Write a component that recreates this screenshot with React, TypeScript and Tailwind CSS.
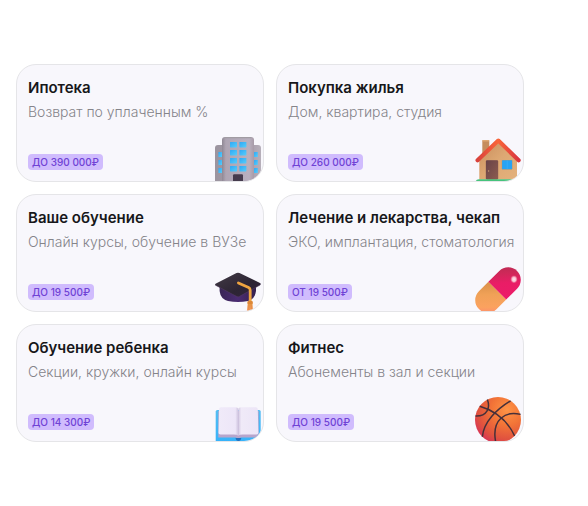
import type { ReactNode } from "react";

function BuildingIcon() {
  return (
    <>
      <defs>
        <linearGradient id="tower" x1="0" x2="1" y1="0" y2="0">
          <stop offset="0" stopColor="#8f8894" />
          <stop offset="0.12" stopColor="#aea5b3" />
          <stop offset="0.85" stopColor="#b9b0bf" />
          <stop offset="1" stopColor="#a89ba8" />
        </linearGradient>
        <linearGradient id="wing" x1="0" x2="1" y1="0" y2="0">
          <stop offset="0" stopColor="#9b949f" />
          <stop offset="0.8" stopColor="#aaa0ae" />
          <stop offset="1" stopColor="#b7b0ba" />
        </linearGradient>
        <linearGradient id="pane" x1="0" x2="1" y1="0" y2="1">
          <stop offset="0" stopColor="#2fa8f5" />
          <stop offset="1" stopColor="#56cdfb" />
        </linearGradient>
      </defs>
      <rect x="0" y="8" width="46" height="40" rx="3" fill="url(#wing)" />
      <rect x="7" y="0" width="32" height="48" rx="3" fill="url(#tower)" />
      <path d="M10 0.6H36" stroke="#a19ca3" strokeWidth="1.2" strokeLinecap="round" />
      {[5, 13, 21, 29].map((y) => (
        <g key={y} fill="url(#pane)">
          <rect x="15" y={y} width="7" height="5.4" rx="0.6" />
          <rect x="24.4" y={y} width="7" height="5.4" rx="0.6" />
        </g>
      ))}
      {[15, 23, 31].map((y) => (
        <g key={y} fill="url(#pane)">
          <rect x="3.4" y={y} width="3.6" height="5" rx="0.5" />
          <rect x="39" y={y} width="3.8" height="5" rx="0.5" />
        </g>
      ))}
      <rect x="18" y="37.3" width="10" height="10" rx="1.2" fill="#453b4d" />
    </>
  );
}

function HouseIcon() {
  return (
    <>
      <defs>
        <linearGradient id="wall" x1="0" x2="1" y1="0" y2="1">
          <stop offset="0" stopColor="#c98d5c" />
          <stop offset="0.5" stopColor="#dda873" />
          <stop offset="1" stopColor="#e3b27d" />
        </linearGradient>
        <linearGradient id="roof" x1="0" x2="1" y1="0" y2="0">
          <stop offset="0" stopColor="#d9423c" />
          <stop offset="0.5" stopColor="#f9663a" />
          <stop offset="1" stopColor="#d93640" />
        </linearGradient>
        <linearGradient id="door" x1="0" x2="1" y1="0" y2="1">
          <stop offset="0" stopColor="#684247" />
          <stop offset="1" stopColor="#8d5c50" />
        </linearGradient>
      </defs>
      <rect x="7.3" y="3" width="7" height="18" rx="1" fill="#c58d5d" />
      <rect x="7.3" y="3" width="7" height="1.6" rx="0.8" fill="#dfa873" />
      <path d="M23.3 5 42 22V42.5H4.3V22Z" fill="url(#wall)" />
      <path d="M2.6 23.2 23.3 3.6 43.6 23.2" fill="none" stroke="url(#roof)" strokeWidth="4.2" strokeLinecap="round" strokeLinejoin="round" />
      <rect x="10.7" y="23" width="12.6" height="19.5" rx="1.4" fill="#c3916b" />
      <rect x="10.9" y="23.2" width="12.2" height="19.3" rx="1.2" fill="url(#door)" />
      <circle cx="13.6" cy="34" r="0.7" fill="#c99b76" />
      <rect x="26.7" y="23" width="10.6" height="9.6" rx="0.8" fill="#c49161" />
      <rect x="27.1" y="23.3" width="10" height="9" rx="0.5" fill="#27a3f4" />
      <path d="M32.2 23.4V32.2" stroke="#3fb1f7" strokeWidth="0.7" />
      <path d="M0.7 44.5Q1 42.2 4 42.2H42Q45 42.2 45.3 44.5Z" fill="#46c37c" />
    </>
  );
}

function GraduationCapIcon() {
  return (
    <>
      <defs>
        <linearGradient id="board" x1="0" x2="1" y1="0" y2="1">
          <stop offset="0" stopColor="#433b46" />
          <stop offset="0.6" stopColor="#2d2534" />
          <stop offset="1" stopColor="#33223f" />
        </linearGradient>
        <linearGradient id="skull" x1="0" x2="1" y1="0" y2="0">
          <stop offset="0" stopColor="#392555" />
          <stop offset="0.5" stopColor="#4b2c73" />
          <stop offset="1" stopColor="#35214e" />
        </linearGradient>
        <linearGradient id="tassel" x1="0" x2="0" y1="0" y2="1">
          <stop offset="0" stopColor="#e6973b" />
          <stop offset="1" stopColor="#f99c6a" />
        </linearGradient>
      </defs>
      <path d="M4.6 17H41V24Q40 32 33 34Q23 35.8 13 34Q5.5 32 4.6 24Z" fill="url(#skull)" />
      <path d="M22 29.6 0.3 18.2Q-0.4 17 1 16.4L21.5 6.1Q23 5.3 24.5 6.1L45 16Q46.4 17 45.2 18L24.6 29.3Q23.3 30.2 22 29.6Z" fill="url(#board)" />
      <path d="M0.4 18.2 22 29.6Q23.3 30.2 24.6 29.3L45.2 18" fill="none" stroke="#563e63" strokeWidth="0.5" />
      <path d="M23.4 15.9 33.6 20.6Q35.2 21.4 35.2 23.4V35" fill="none" stroke="#efa440" strokeWidth="2.8" strokeLinecap="round" strokeLinejoin="round" />
      <path d="M33 34.5H37.2L38.4 47H31.5Z" fill="url(#tassel)" />
      <rect x="32.4" y="34" width="5.4" height="3.2" rx="1.2" fill="#dd8737" />
      <path d="M34 38 33.6 46M36.2 38 36.6 46" stroke="#d87d45" strokeWidth="0.5" />
    </>
  );
}

function PillIcon() {
  return (
    <>
      <defs>
        <linearGradient id="pillTop" x1="1" x2="0" y1="0" y2="1">
          <stop offset="0" stopColor="#b52c51" />
          <stop offset="0.3" stopColor="#cf2859" />
          <stop offset="0.55" stopColor="#e91d66" />
          <stop offset="1" stopColor="#ec1c69" />
        </linearGradient>
        <linearGradient id="pillBottom" x1="1" x2="0" y1="0" y2="1">
          <stop offset="0" stopColor="#d98f4a" />
          <stop offset="0.35" stopColor="#f0a157" />
          <stop offset="0.7" stopColor="#fba25f" />
          <stop offset="1" stopColor="#ff7c78" />
        </linearGradient>
        <radialGradient id="shine">
          <stop offset="0" stopColor="#ffe9f1" />
          <stop offset="0.6" stopColor="#f8bfcf" />
          <stop offset="1" stopColor="#ee7d9c" stopOpacity="0.4" />
        </radialGradient>
      </defs>
      <g transform="rotate(-45 23 23)">
        <path d="M22 10.4H8.6A12.6 12.6 0 0 0 8.6 35.6H22Z" fill="url(#pillBottom)" />
        <path d="M22 10.4H37.4A12.6 12.6 0 0 1 37.4 35.6H22Z" fill="url(#pillTop)" />
      </g>
      <ellipse cx="39" cy="12.3" rx="3.3" ry="3.7" fill="url(#shine)" />
    </>
  );
}

function BookIcon() {
  return (
    <>
      <defs>
        <linearGradient id="cover" x1="0" x2="0" y1="0" y2="1">
          <stop offset="0" stopColor="#55bdf2" />
          <stop offset="1" stopColor="#35b2fa" />
        </linearGradient>
        <linearGradient id="pageLeft" x1="0" x2="1" y1="0" y2="0">
          <stop offset="0" stopColor="#f0eaf9" />
          <stop offset="0.85" stopColor="#ede6f8" />
          <stop offset="1" stopColor="#cfc4df" />
        </linearGradient>
        <linearGradient id="pageRight" x1="0" x2="1" y1="0" y2="0">
          <stop offset="0" stopColor="#d3c8e2" />
          <stop offset="0.15" stopColor="#f0eaf8" />
          <stop offset="1" stopColor="#ece5f7" />
        </linearGradient>
      </defs>
      <rect x="0.7" y="13" width="45" height="33" rx="1.6" fill="url(#cover)" />
      <path d="M3.3 14H43.7V40.5H26Q23.3 42 20.6 40.5H3.3Z" fill="#b7a5cc" />
      <path d="M4 12.2Q4 10.3 6 10.3H20Q23.3 10.3 23.3 12.5V38.7Q22 37.4 19 37.4H5.5Q3.5 37.4 3.5 36Z" fill="url(#pageLeft)" />
      <path d="M42.8 12.2Q42.8 10.3 40.8 10.3H26.6Q23.3 10.3 23.3 12.5V38.7Q24.6 37.4 27.6 37.4H41.5Q43.4 37.4 43.4 36Z" fill="url(#pageRight)" />
      <path d="M20.5 41H26.3Q25.8 44 23.4 44Q21 44 20.5 41Z" fill="#226fbe" />
    </>
  );
}

function BasketballIcon() {
  return (
    <>
      <defs>
        <radialGradient id="ball" cx="0.7" cy="0.28" r="0.85">
          <stop offset="0" stopColor="#ff9446" />
          <stop offset="0.4" stopColor="#f27437" />
          <stop offset="0.75" stopColor="#e0523f" />
          <stop offset="1" stopColor="#d52c5c" />
        </radialGradient>
      </defs>
      <circle cx="23" cy="23" r="23" fill="url(#ball)" />
      <g fill="none" stroke="#46303a" strokeWidth="1.5">
        <path d="M4.7 9.2Q29 16 39.6 38.9" />
        <path d="M12.4 2.6C15.5 11 12 19.5 0.5 19" />
        <path d="M35.6 3.8C22 12 8.5 25 7.4 39.8" />
        <path d="M45.6 17.4C31 13.5 16 22 20.8 45.6" />
      </g>
    </>
  );
}

type Benefit = {
  title: string;
  description: string;
  amount: string;
  icon: ReactNode;
};

const benefits: Benefit[] = [
  { title: "Ипотека", description: "Возврат по уплаченным %", amount: "ДО 390 000₽", icon: <BuildingIcon /> },
  { title: "Покупка жилья", description: "Дом, квартира, студия", amount: "ДО 260 000₽", icon: <HouseIcon /> },
  { title: "Ваше обучение", description: "Онлайн курсы, обучение в ВУЗе", amount: "ДО 19 500₽", icon: <GraduationCapIcon /> },
  { title: "Лечение и лекарства, чекап", description: "ЭКО, имплантация, стоматология", amount: "ОТ 19 500₽", icon: <PillIcon /> },
  { title: "Обучение ребенка", description: "Секции, кружки, онлайн курсы", amount: "ДО 14 300₽", icon: <BookIcon /> },
  { title: "Фитнес", description: "Абонементы в зал и секции", amount: "ДО 19 500₽", icon: <BasketballIcon /> },
];

function BenefitCard({ title, description, amount, icon }: Benefit) {
  return (
    <li className="relative flex flex-col items-start overflow-hidden rounded-[20px] border border-[#e5e5e8] bg-[#f8f7fc] px-[11px] pt-[13px] pb-[11px]">
      <h2 className="text-[15px] leading-5 font-semibold whitespace-nowrap text-[#17171a]">{title}</h2>
      <p className="mt-1 text-sm leading-5 font-light whitespace-nowrap text-[#85848a]">{description}</p>
      <span className="mt-8 rounded bg-[#d0bcfd] px-1 text-[10px] leading-4 font-medium text-[#6f42d5]">{amount}</span>
      <svg className="absolute right-[2px] bottom-[-2px] size-[46px]" viewBox="0 0 46 46" aria-hidden="true">
        {icon}
      </svg>
    </li>
  );
}

export default function App() {
  return (
    <main className="min-h-screen bg-white py-16 pr-16 pl-4 font-['Inter',sans-serif]">
      <ul className="grid grid-cols-2 gap-3">
        {benefits.map((benefit) => (
          <BenefitCard key={benefit.title} {...benefit} />
        ))}
      </ul>
    </main>
  );
}
